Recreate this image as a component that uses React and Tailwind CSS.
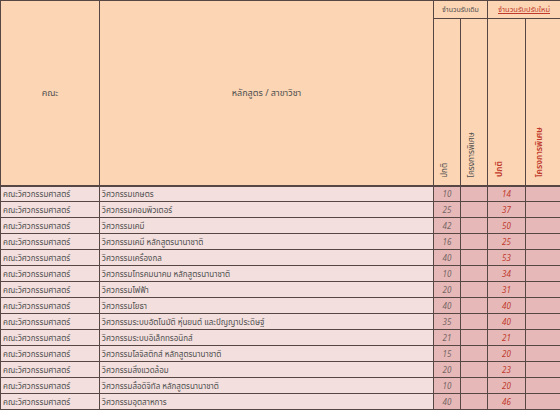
import React from 'react';

const rows = [
  ['วิศวกรรมเกษตร', 10, 14],
  ['วิศวกรรมคอมพิวเตอร์', 25, 37],
  ['วิศวกรรมเคมี', 42, 50],
  ['วิศวกรรมเคมี หลักสูตรนานาชาติ', 16, 25],
  ['วิศวกรรมเครื่องกล', 40, 53],
  ['วิศวกรรมโทรคมนาคม หลักสูตรนานาชาติ', 10, 34],
  ['วิศวกรรมไฟฟ้า', 20, 31],
  ['วิศวกรรมโยธา', 40, 40],
  ['วิศวกรรมระบบอัตโนมัติ หุ่นยนต์ และปัญญาประดิษฐ์', 35, 40],
  ['วิศวกรรมระบบอิเล็กทรอนิกส์', 21, 21],
  ['วิศวกรรมโลจิสติกส์ หลักสูตรนานาชาติ', 15, 20],
  ['วิศวกรรมสิ่งแวดล้อม', 20, 23],
  ['วิศวกรรมสื่อดิจิทัล หลักสูตรนานาชาติ', 10, 20],
  ['วิศวกรรมอุตสาหการ', 40, 46],
];

const cell = 'border border-[#564744] p-0';

const App = () => {
  return (
    <div className="w-[560px] h-[410px] overflow-hidden bg-white font-['Noto_Sans','Noto_Sans_Thai',sans-serif] text-[#4f4f4f]">
      <table className="table-fixed border-collapse w-[560px]">
        <colgroup>
          <col className="w-[99px]" />
          <col className="w-[334px]" />
          <col className="w-[27px]" />
          <col className="w-[27px]" />
          <col className="w-[38px]" />
          <col className="w-[35px]" />
        </colgroup>
        <thead className="bg-[#fcd5b4]">
          <tr className="h-[18px]">
            <th rowSpan={2} className={`${cell} border-b-2 text-[9px] font-normal text-center align-middle`}>คณะ</th>
            <th rowSpan={2} className={`${cell} border-b-2 text-[9px] font-normal text-center align-middle`}>หลักสูตร / สาขาวิชา</th>
            <th colSpan={2} className={`${cell} text-[7px] font-normal text-center leading-none`}>จำนวนรับเดิม</th>
            <th colSpan={2} className={`${cell} text-[7.5px] font-normal text-center leading-none text-[#c0392b] underline`}>จำนวนรับปรับใหม่</th>
          </tr>
          <tr className="h-[167px]">
            <th className={`${cell} border-b-2 align-bottom font-normal text-[8px]`}>
              <div className="flex justify-start pl-[6px] pb-[7px]">
                <span className="[writing-mode:vertical-rl] rotate-180 leading-none">ปกติ</span>
              </div>
            </th>
            <th className={`${cell} border-b-2 align-bottom font-normal text-[8px]`}>
              <div className="flex justify-start pl-[6px] pb-[7px]">
                <span className="[writing-mode:vertical-rl] rotate-180 leading-none">โครงการพิเศษ</span>
              </div>
            </th>
            <th className={`${cell} border-b-2 align-bottom font-semibold text-[8.5px] text-[#c0392b]`}>
              <div className="flex justify-start pl-[7px] pb-[7px]">
                <span className="[writing-mode:vertical-rl] rotate-180 leading-none">ปกติ</span>
              </div>
            </th>
            <th className={`${cell} border-b-2 align-bottom font-semibold text-[8.5px] text-[#c0392b]`}>
              <div className="flex justify-start pl-[9px] pb-[7px]">
                <span className="[writing-mode:vertical-rl] rotate-180 leading-none">โครงการพิเศษ</span>
              </div>
            </th>
          </tr>
        </thead>
        <tbody className="text-[8px]">
          {rows.map(([name, oldN, newN], i) => (
            <tr key={i} className="h-[16px]">
              <td className={`${cell} bg-[#f3dfde] pl-[2px] whitespace-nowrap overflow-hidden`}>คณะวิศวกรรมศาสตร์</td>
              <td className={`${cell} bg-[#f3dfde] pl-[2px] whitespace-nowrap overflow-hidden`}>{name}</td>
              <td className={`${cell} bg-[#e6b8b7] text-center italic text-[#756565]`}>{oldN}</td>
              <td className={`${cell} bg-[#e6b8b7]`}></td>
              <td className={`${cell} bg-[#e6b8b7] text-center italic text-[#c0392b]`}>{newN}</td>
              <td className={`${cell} bg-[#e6b8b7]`}></td>
            </tr>
          ))}
        </tbody>
      </table>
    </div>
  );
};

export default App;
